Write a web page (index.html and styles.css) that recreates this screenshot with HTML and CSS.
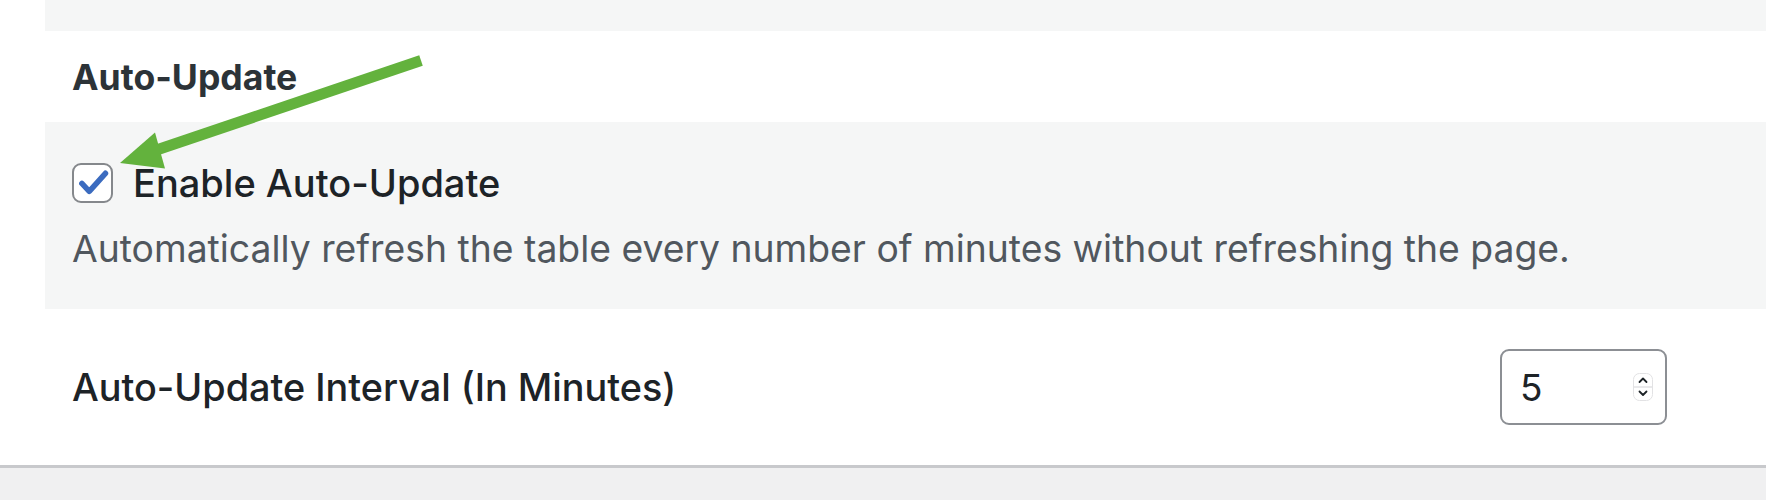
FILE: index.html
```html
<!DOCTYPE html>
<html lang="en">
<head>
<meta charset="utf-8">
<title>Auto-Update settings</title>
<link rel="stylesheet" href="styles.css">
</head>
<body>
<div class="page">
  <div class="strip"></div>
  <section class="group">
    <h2 class="group-title">Auto-Update</h2>
    <div class="option shaded">
      <label class="check-row">
        <span class="checkbox">
          <svg viewBox="0 0 40 40" width="40" height="40" aria-hidden="true">
            <path d="M8.5 20.5 L16.5 29 L34 9.5" fill="none" stroke="#3b6bbf" stroke-width="6" stroke-linecap="round" stroke-linejoin="round"/>
          </svg>
        </span>
        <span class="check-label">Enable Auto-Update</span>
      </label>
      <p class="desc">Automatically refresh the table every number of minutes without refreshing the page.</p>
    </div>
    <div class="option interval">
      <span class="field-label">Auto-Update Interval (In Minutes)</span>
      <div class="number-input">
        <span class="num">5</span>
        <span class="spinner">
          <svg viewBox="0 0 20 28" width="20" height="28" aria-hidden="true">
            <rect x="0.5" y="0.5" width="19" height="27" rx="6" fill="#fff" stroke="#e2e2e4"/>
            <line x1="1" y1="14" x2="19" y2="14" stroke="#e2e2e4" stroke-width="1.5"/>
            <path d="M6.5 9 L10 5.5 L13.5 9" fill="none" stroke="#1d2327" stroke-width="1.8" stroke-linecap="round" stroke-linejoin="round"/>
            <path d="M6.5 18.5 L10 22 L13.5 18.5" fill="none" stroke="#1d2327" stroke-width="1.8" stroke-linecap="round" stroke-linejoin="round"/>
          </svg>
        </span>
      </div>
    </div>
  </section>
  <div class="footer"></div>
  <svg class="arrow" viewBox="0 0 1766 500" width="1766" height="500" aria-hidden="true">
    <line x1="158" y1="149.5" x2="421" y2="60.5" stroke="#63b23d" stroke-width="11"/>
    <polygon points="120,163 155,132.5 165,168.5" fill="#63b23d"/>
  </svg>
</div>
</body>
</html>
```

FILE: styles.css
```css
* { box-sizing: border-box; }

html, body {
  margin: 0;
  padding: 0;
  background: #ffffff;
}

body {
  font-family: Inter, "Noto Sans", "Liberation Sans", sans-serif;
  color: #1d2327;
  width: 1766px;
  height: 500px;
  overflow: hidden;
}

.page {
  position: relative;
  width: 1766px;
  height: 500px;
}

.strip {
  margin-left: 45px;
  height: 31px;
  background: #f5f6f6;
}

.group {
  margin-left: 45px;
}

.group-title {
  margin: 0;
  height: 91px;
  padding: 29px 0 0 27px;
  font-size: 35.6px;
  line-height: 36px;
  font-weight: 650;
  color: #2c3338;
}

.option {
  padding-left: 27px;
}

.shaded {
  background: #f5f6f6;
  height: 187px;
  padding-top: 41px;
}

.check-row {
  display: flex;
  align-items: center;
  gap: 20px;
  height: 40px;
}

.checkbox {
  width: 41px;
  height: 40px;
  border: 2.5px solid #85888c;
  border-radius: 9px;
  background: #ffffff;
  display: flex;
  align-items: center;
  justify-content: center;
}

.checkbox svg {
  display: block;
}

.check-label {
  font-size: 38px;
  line-height: 40px;
  font-weight: 500;
  color: #1d2327;
}

.desc {
  margin: 23px 0 0;
  font-size: 37.3px;
  line-height: 46px;
  color: #50575e;
}

.interval {
  height: 156px;
  display: flex;
  align-items: center;
  justify-content: space-between;
  padding-right: 99px;
}

.field-label {
  font-size: 37.8px;
  font-weight: 500;
  color: #1d2327;
}

.number-input {
  width: 167px;
  height: 76px;
  border: 2px solid #8c8f94;
  border-radius: 9px;
  display: flex;
  align-items: center;
  justify-content: space-between;
  padding: 0 12px 0 18px;
}

.num {
  font-size: 37px;
  color: #1d2327;
}

.spinner svg {
  display: block;
}

.footer {
  height: 35px;
  border-top: 3px solid #c8c9cc;
  background: #f0f0f1;
}

.arrow {
  position: absolute;
  left: 0;
  top: 0;
  pointer-events: none;
}
```
